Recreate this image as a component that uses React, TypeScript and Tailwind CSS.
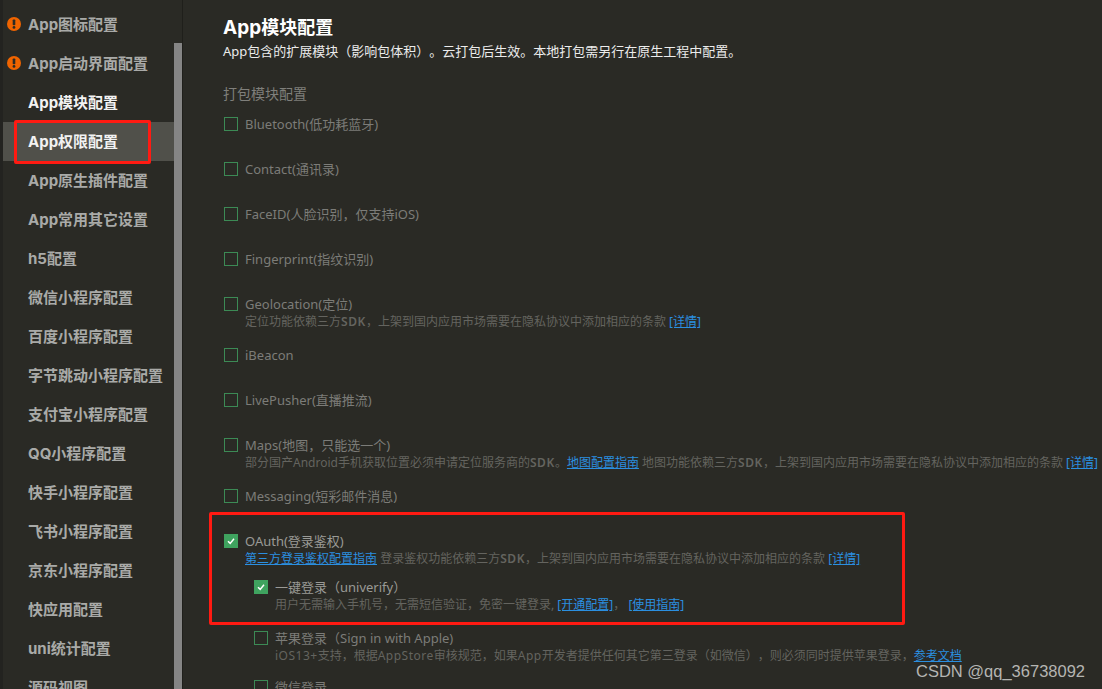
const cjk = "font-['Noto_Sans','Noto_Sans_CJK_SC',sans-serif]"
const heading = "font-['Inter','Noto_Sans_CJK_SC',sans-serif]"

const navItems = [
  { label: "App图标配置", warn: true },
  { label: "App启动界面配置", warn: true },
  { label: "App模块配置", bright: true },
  { label: "App权限配置", bright: true, active: true },
  { label: "App原生插件配置" },
  { label: "App常用其它设置" },
  { label: "h5配置" },
  { label: "微信小程序配置" },
  { label: "百度小程序配置" },
  { label: "字节跳动小程序配置" },
  { label: "支付宝小程序配置" },
  { label: "QQ小程序配置" },
  { label: "快手小程序配置" },
  { label: "飞书小程序配置" },
  { label: "京东小程序配置" },
  { label: "快应用配置" },
  { label: "uni统计配置" },
  { label: "源码视图" },
]

function Warn() {
  return (
    <svg className="absolute left-[4px] top-[12px]" width="14" height="14" viewBox="0 0 14 14">
      <circle cx="7" cy="7" r="7" fill="#f06400" />
      <rect x="5.7" y="2.4" width="2.6" height="5.8" rx="0.8" fill="#2a2a25" />
      <circle cx="7" cy="10.4" r="1.4" fill="#2a2a25" />
    </svg>
  )
}

function Check({ checked }: { checked?: boolean }) {
  if (checked) {
    return (
      <span className="flex h-[14px] w-[14px] shrink-0 items-center justify-center bg-[#3fa35f]">
        <svg width="10" height="10" viewBox="0 0 10 10" fill="none">
          <path d="M2 5.2 4.2 7.4 8 2.8" stroke="#fff" strokeWidth="1.5" />
        </svg>
      </span>
    )
  }
  return <span className="h-[14px] w-[14px] shrink-0 border border-[#3c8a55]" />
}

function A({ children }: { children: React.ReactNode }) {
  return <span className="text-[#2b8fe0] underline">{children}</span>
}

// latin runs in the small print sit wider than Noto Sans
function Sdk() {
  return <span className="font-semibold tracking-[0.6px]">SDK</span>
}

function Lat({ children }: { children: React.ReactNode }) {
  return <span className="tracking-[0.5px]">{children}</span>
}

function Row({
  label,
  desc,
  checked,
  height = 45,
  nested,
}: {
  label: string
  desc?: React.ReactNode
  checked?: boolean
  height?: number
  nested?: boolean
}) {
  return (
    <div className={nested ? "pl-[30px]" : ""} style={{ height }}>
      <div className="flex h-5 items-center gap-[7px] pl-px">
        <Check checked={checked} />
        <span className={`relative top-px text-[13px] ${checked ? "text-[#9a9a96]" : "text-[#7c7c78]"}`}>{label}</span>
      </div>
      {desc && <div className="ml-[22px] h-[17px] whitespace-nowrap text-[12px] leading-[16px] text-[#64645f]">{desc}</div>}
    </div>
  )
}

export default function App() {
  return (
    <div className={`relative flex h-[689px] w-[1102px] overflow-hidden bg-[#2a2a25] [text-spacing-trim:space-all] ${cjk}`}>
      {/* sidebar */}
      <div className="flex h-full w-[183px] shrink-0 border-r border-[#1f1f1b]">
        <div className="w-[3px] shrink-0 bg-[#232320]" />
        <div className="w-[171px] shrink-0 pt-[5px]">
          {navItems.map((item) => (
            <div
              key={item.label}
              className={`relative flex h-[39px] items-center whitespace-nowrap pl-[25px] text-[15px] font-bold ${heading} ${
                item.active ? "bg-[#50504a]" : ""
              } ${item.bright ? "text-[#f2f2f2]" : "text-[#a9aaa8]"}`}
            >
              {item.warn && <Warn />}
              <span className="relative top-px">{item.label}</span>
            </div>
          ))}
        </div>
        <div className="mt-[43px] w-2 bg-[#858585]" />
      </div>

      {/* main */}
      <div className="min-w-0 flex-1 pl-10 pt-[16px]">
        <h1 className={`h-[25px] text-[18px] font-bold leading-[24px] text-white ${heading}`}>
          <span className="text-[19px]">App</span>模块配置
        </h1>
        <p className="h-[20px] whitespace-nowrap text-[13px] leading-[20px] text-[#ececec]">
          App包含的扩展模块（影响包体积）。云打包后生效。本地打包需另行在原生工程中配置。
        </p>
        <div className="mt-[23px] h-[30px] text-[14px] leading-[20px] text-[#7f7f7b]">打包模块配置</div>
        <Row label="Bluetooth(低功耗蓝牙)" />
        <Row label="Contact(通讯录)" />
        <Row label="FaceID(人脸识别，仅支持iOS)" />
        <Row label="Fingerprint(指纹识别)" />
        <Row
          label="Geolocation(定位)"
          height={51}
          desc={
            <>
              定位功能依赖三方<Sdk />，上架到国内应用市场需要在隐私协议中添加相应的条款 <A>[详情]</A>
            </>
          }
        />
        <Row label="iBeacon" />
        <Row label="LivePusher(直播推流)" />
        <Row
          label="Maps(地图，只能选一个)"
          height={51}
          desc={
            <>
              部分国产Android手机获取位置必须申请定位服务商的<Sdk />。<A>地图配置指南</A> 地图功能依赖三方<Sdk />，上架到国内应用市场需要在隐私协议中添加相应的条款 <A>[详情]</A>
            </>
          }
        />
        <Row label="Messaging(短彩邮件消息)" />
        <Row
          label="OAuth(登录鉴权)"
          checked
          height={46}
          desc={
            <>
              <A>第三方登录鉴权配置指南</A> 登录鉴权功能依赖三方<Sdk />，上架到国内应用市场需要在隐私协议中添加相应的条款 <A>[详情]</A>
            </>
          }
        />
        <Row
          nested
          checked
          label="一键登录（univerify）"
          height={51}
          desc={
            <>
              用户无需输入手机号，无需短信验证，免密一键登录,&nbsp;<A>[开通配置]</A>， <A>[使用指南]</A>
            </>
          }
        />
        <Row
          nested
          label="苹果登录（Sign in with Apple)"
          height={49}
          desc={
            <>
              <Lat>iOS13+</Lat>支持，根据<Lat>AppStore</Lat>审核规范，如果<Lat>App</Lat>开发者提供任何其它第三登录（如微信），则必须同时提供苹果登录，<A>参考文档</A>
            </>
          }
        />
        <Row nested label="微信登录" />
      </div>

      {/* red annotation boxes */}
      <div className="absolute left-[14px] top-[120px] h-[44px] w-[137px] rounded-[2px] border-[3px] border-[#ff1a12]" />
      <div className="absolute left-[209px] top-[512px] h-[113px] w-[696px] rounded-[2px] border-[3px] border-[#ff1a12]" />

      {/* watermark */}
      <div className="absolute left-[916px] top-[661px] font-['Liberation_Sans',sans-serif] text-[16.5px] leading-5 text-[#b5b5b2]">
        CSDN @qq_36738092
      </div>
    </div>
  )
}
